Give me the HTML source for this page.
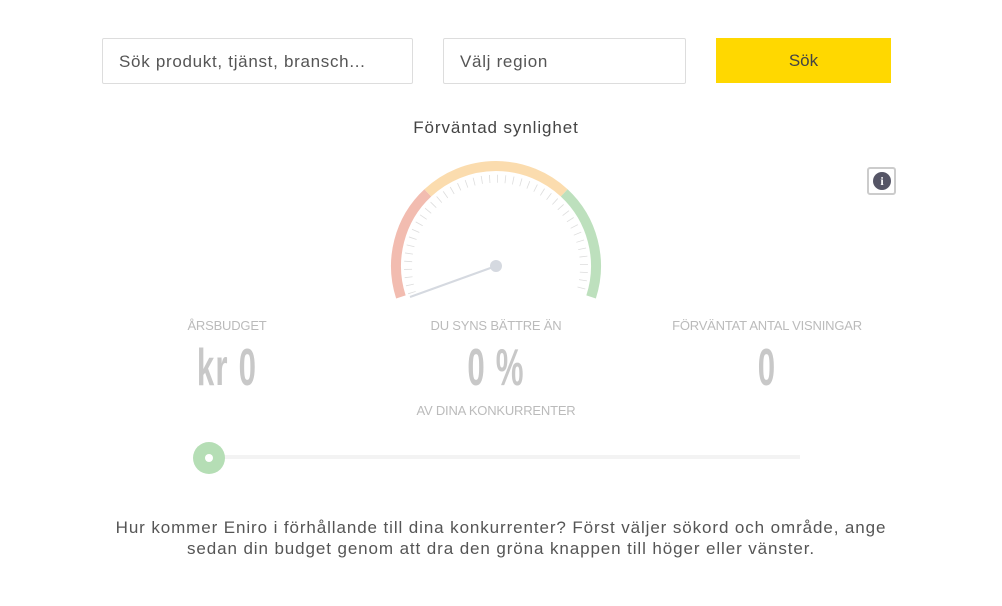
<!DOCTYPE html>
<html><head><meta charset="utf-8"><style>
*{margin:0;padding:0;box-sizing:border-box}
body{width:1002px;height:606px;background:#fff;font-family:"Liberation Sans",sans-serif;position:relative;overflow:hidden}
.in{position:absolute;top:38px;height:46px;border:1px solid #ddd;border-radius:2px;font-size:17px;color:#555;padding:13px 0 0 16px;letter-spacing:0.7px}
.btn{position:absolute;left:716px;top:38px;width:175px;height:45px;background:#ffd800;color:#444;font-size:17px;text-align:center;line-height:45px}
.t{position:absolute;text-align:center;width:300px}
.lab{font-size:13px;color:#bbb;top:318px;letter-spacing:-0.2px}
.num{font-weight:bold;font-size:52px;color:#c8c8c8;top:338px;transform:scaleX(0.6);letter-spacing:2px}
</style></head><body>
<div class="in" style="left:102px;width:311px">Sök produkt, tjänst, bransch...</div>
<div class="in" style="left:443px;width:243px">Välj region</div>
<div class="btn">Sök</div>
<div class="t" style="left:346px;top:118px;font-size:17px;color:#444;letter-spacing:0.9px">Förväntad synlighet</div>
<div style="position:absolute;left:867px;top:167px;width:29px;height:28px;border:2px solid #ccc;border-radius:3px"><div style="position:absolute;left:4px;top:3px;width:18px;height:18px;border-radius:50%;background:#556;color:#fff;font:bold 12px 'Liberation Serif',serif;text-align:center;line-height:18px">i</div></div>
<svg style="position:absolute;left:0;top:0" width="1002" height="606">
<path d="M400.9 296.9 A100 100 0 0 1 427.8 192.9" fill="none" stroke="#f2bcb0" stroke-width="10"/>
<path d="M427.8 192.9 A100 100 0 0 1 564.2 192.9" fill="none" stroke="#fbdcae" stroke-width="10"/>
<path d="M564.2 192.9 A100 100 0 0 1 591.1 296.9" fill="none" stroke="#bde0bd" stroke-width="10"/>
<path d="M412 293 A88 88 0 1 1 580 293" fill="none" stroke="#ddd" stroke-width="8" stroke-dasharray="0.8 7.1"/>
<line x1="410" y1="297" x2="496" y2="266" stroke="#d5d9e0" stroke-width="2"/>
<circle cx="496" cy="266" r="6" fill="#d5d9e0"/>
<rect x="222" y="455" width="578" height="4" fill="#f3f3f3"/>
<circle cx="209" cy="458" r="16" fill="#b5deb5"/>
<circle cx="209" cy="458" r="4" fill="#fff"/>
</svg>
<div class="t lab" style="left:77px">ÅRSBUDGET</div>
<div class="t lab" style="left:346px">DU SYNS BÄTTRE ÄN</div>
<div class="t lab" style="left:617px">FÖRVÄNTAT ANTAL VISNINGAR</div>
<div class="t num" style="left:77px">kr 0</div>
<div class="t num" style="left:346px">0 %</div>
<div class="t num" style="left:617px">0</div>
<div class="t lab" style="left:346px;top:403px">AV DINA KONKURRENTER</div>
<div style="position:absolute;left:0;width:1002px;top:517px;text-align:center;font-size:17px;color:#555;line-height:21px;letter-spacing:0.9px">Hur kommer Eniro i förhållande till dina konkurrenter? Först väljer sökord och område, ange<br>sedan din budget genom att dra den gröna knappen till höger eller vänster.</div>
</body></html>
